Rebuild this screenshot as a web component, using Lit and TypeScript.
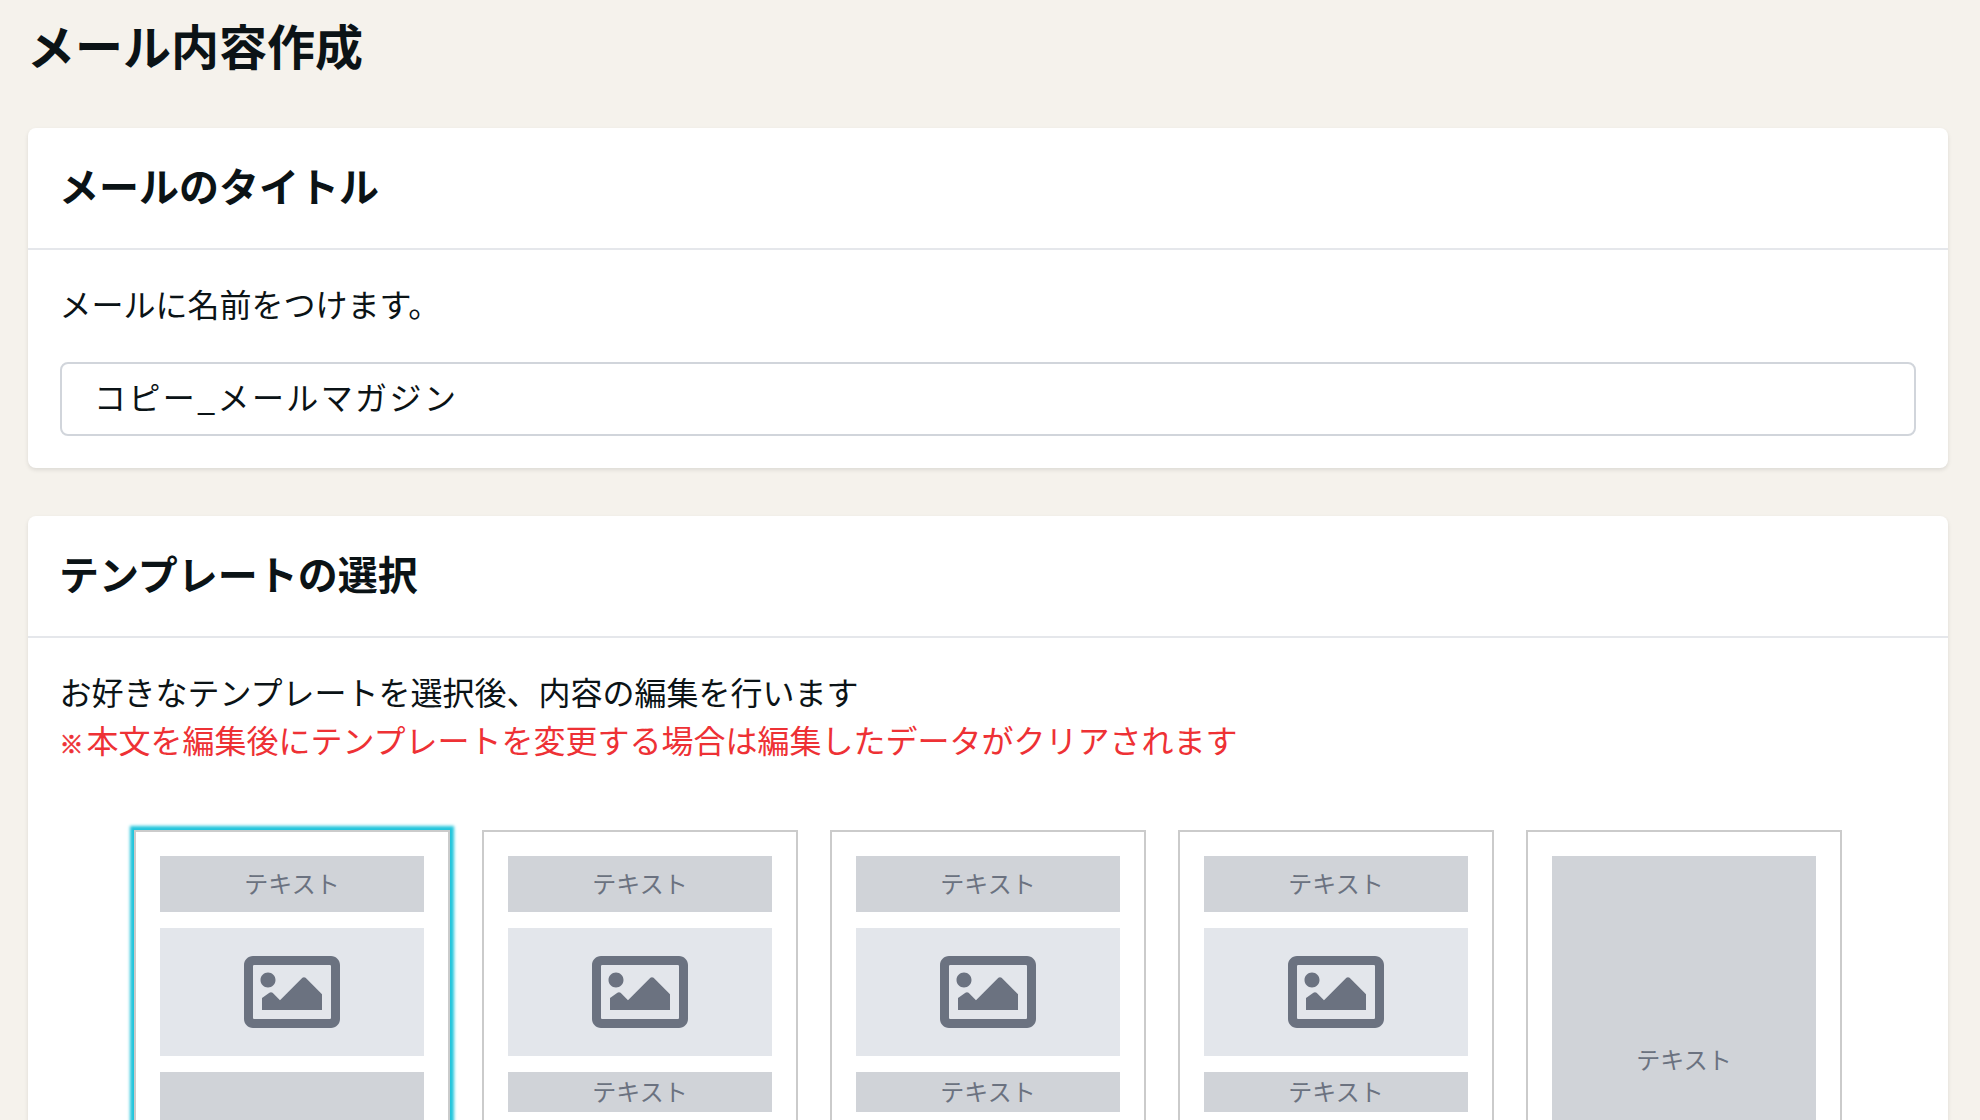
import { LitElement, html, css, svg } from "lit";
import { customElement } from "lit/decorators.js";

type Tile = { rows: { kind: "text" | "image"; h: number; label?: string }[]; selected?: boolean };

const iconPath =
  "M464 64H48C21.49 64 0 85.49 0 112v288c0 26.51 21.49 48 48 48h416c26.51 0 48-21.49 48-48V112c0-26.51-21.49-48-48-48zm-6 336H54a6 6 0 0 1-6-6V118a6 6 0 0 1 6-6h404a6 6 0 0 1 6 6v276a6 6 0 0 1-6 6zM128 152c-22.091 0-40 17.909-40 40s17.909 40 40 40 40-17.909 40-40-17.909-40-40-40zM96 352h320v-84l-87.515-87.515c-4.686-4.686-12.284-4.686-16.971 0L192 300l-39.515-39.515c-4.686-4.686-12.284-4.686-16.971 0L96 288v64z";

const tiles: Tile[] = [
  {
    selected: true,
    rows: [
      { kind: "text", h: 56, label: "テキスト" },
      { kind: "image", h: 128 },
      { kind: "text", h: 192 },
    ],
  },
  ...[0, 1, 2].map(() => ({
    rows: [
      { kind: "text" as const, h: 56, label: "テキスト" },
      { kind: "image" as const, h: 128 },
      { kind: "text" as const, h: 40, label: "テキスト" },
    ],
  })),
  { rows: [{ kind: "text", h: 408, label: "テキスト" }] },
];

@customElement("app-root")
export class AppRoot extends LitElement {
  static styles = css`
    :host {
      display: block;
      height: 1120px;
      overflow: hidden;
      background: #f5f2ec;
      color: #0b1316;
      font-family: "Noto Sans CJK JP", "Noto Sans", sans-serif;
      font-size: 32px;
      line-height: 48px;
    }
    .page {
      padding: 8px 32px 0 28px;
    }
    h1 {
      margin: 0 0 48px -1px;
      font-size: 48px;
      line-height: 72px;
      font-weight: 700;
    }
    .card {
      background: #fff;
      border-radius: 8px;
      box-shadow: 0 2px 4px rgba(0, 0, 0, 0.1);
      margin-bottom: 48px;
    }
    .head {
      padding: 29px 32px 35px;
      border-bottom: 2px solid #e5e7eb;
    }
    h2 {
      margin: 0 0 0 -1px;
      font-size: 40px;
      line-height: 56px;
      font-weight: 700;
    }
    .body {
      padding: 29px 32px 32px;
    }
    p {
      margin: 0 0 0 -0.5px;
    }
    .field {
      display: block;
      box-sizing: border-box;
      width: 100%;
      height: 74px;
      margin-top: 35px;
      padding: 0 32px 6px;
      border: 2px solid #d1d5db;
      border-radius: 8px;
      background: #fff;
      color: inherit;
      font: inherit;
      letter-spacing: 2.4px;
      outline: none;
    }
    .warn {
      color: #ee3135;
    }
    .mark {
      font-size: 24px;
      line-height: 1;
      font-weight: 700;
      margin-right: 3px;
      -webkit-text-stroke: 0.6px #ee3135;
    }
    .tiles {
      display: flex;
      justify-content: center;
      gap: 32px;
      margin-top: 67px;
    }
    .tile {
      box-sizing: border-box;
      width: 316px;
      padding: 24px;
      border: 2px solid #cbcbcb;
      display: flex;
      flex-direction: column;
      gap: 16px;
    }
    .tile.selected {
      box-shadow: 0 0 3px 4px #22c5dc;
    }
    .row {
      box-sizing: border-box;
      display: flex;
      align-items: center;
      justify-content: center;
    }
    .row.text {
      background: #d0d3d8;
      color: #6b7280;
      font-size: 24px;
      line-height: 36px;
      padding-bottom: 2px;
    }
    .row.image {
      background: #e3e6eb;
    }
    svg {
      display: block;
      width: 96px;
      height: 72px;
      fill: #6b7280;
    }
  `;

  private renderRow(r: Tile["rows"][number]) {
    if (r.kind === "image") {
      return html`<div class="row image" style="height:${r.h}px">
        <svg viewBox="0 64 512 384">${svg`<path d=${iconPath}></path>`}</svg>
      </div>`;
    }
    return html`<div class="row text" style="height:${r.h}px">${r.label ?? ""}</div>`;
  }

  render() {
    return html`<div class="page" lang="ja">
      <h1>メール内容作成</h1>
      <section class="card">
        <div class="head"><h2>メールのタイトル</h2></div>
        <div class="body">
          <p>メールに名前をつけます。</p>
          <input class="field" type="text" .value=${"コピー_メールマガジン"} />
        </div>
      </section>
      <section class="card">
        <div class="head"><h2>テンプレートの選択</h2></div>
        <div class="body">
          <p>お好きなテンプレートを選択後、内容の編集を行います</p>
          <p class="warn"><span class="mark">※</span>本文を編集後にテンプレートを変更する場合は編集したデータがクリアされます</p>
          <div class="tiles">
            ${tiles.map(
              (t) => html`<div class="tile ${t.selected ? "selected" : ""}">
                ${t.rows.map((r) => this.renderRow(r))}
              </div>`
            )}
          </div>
        </div>
      </section>
    </div>`;
  }
}
